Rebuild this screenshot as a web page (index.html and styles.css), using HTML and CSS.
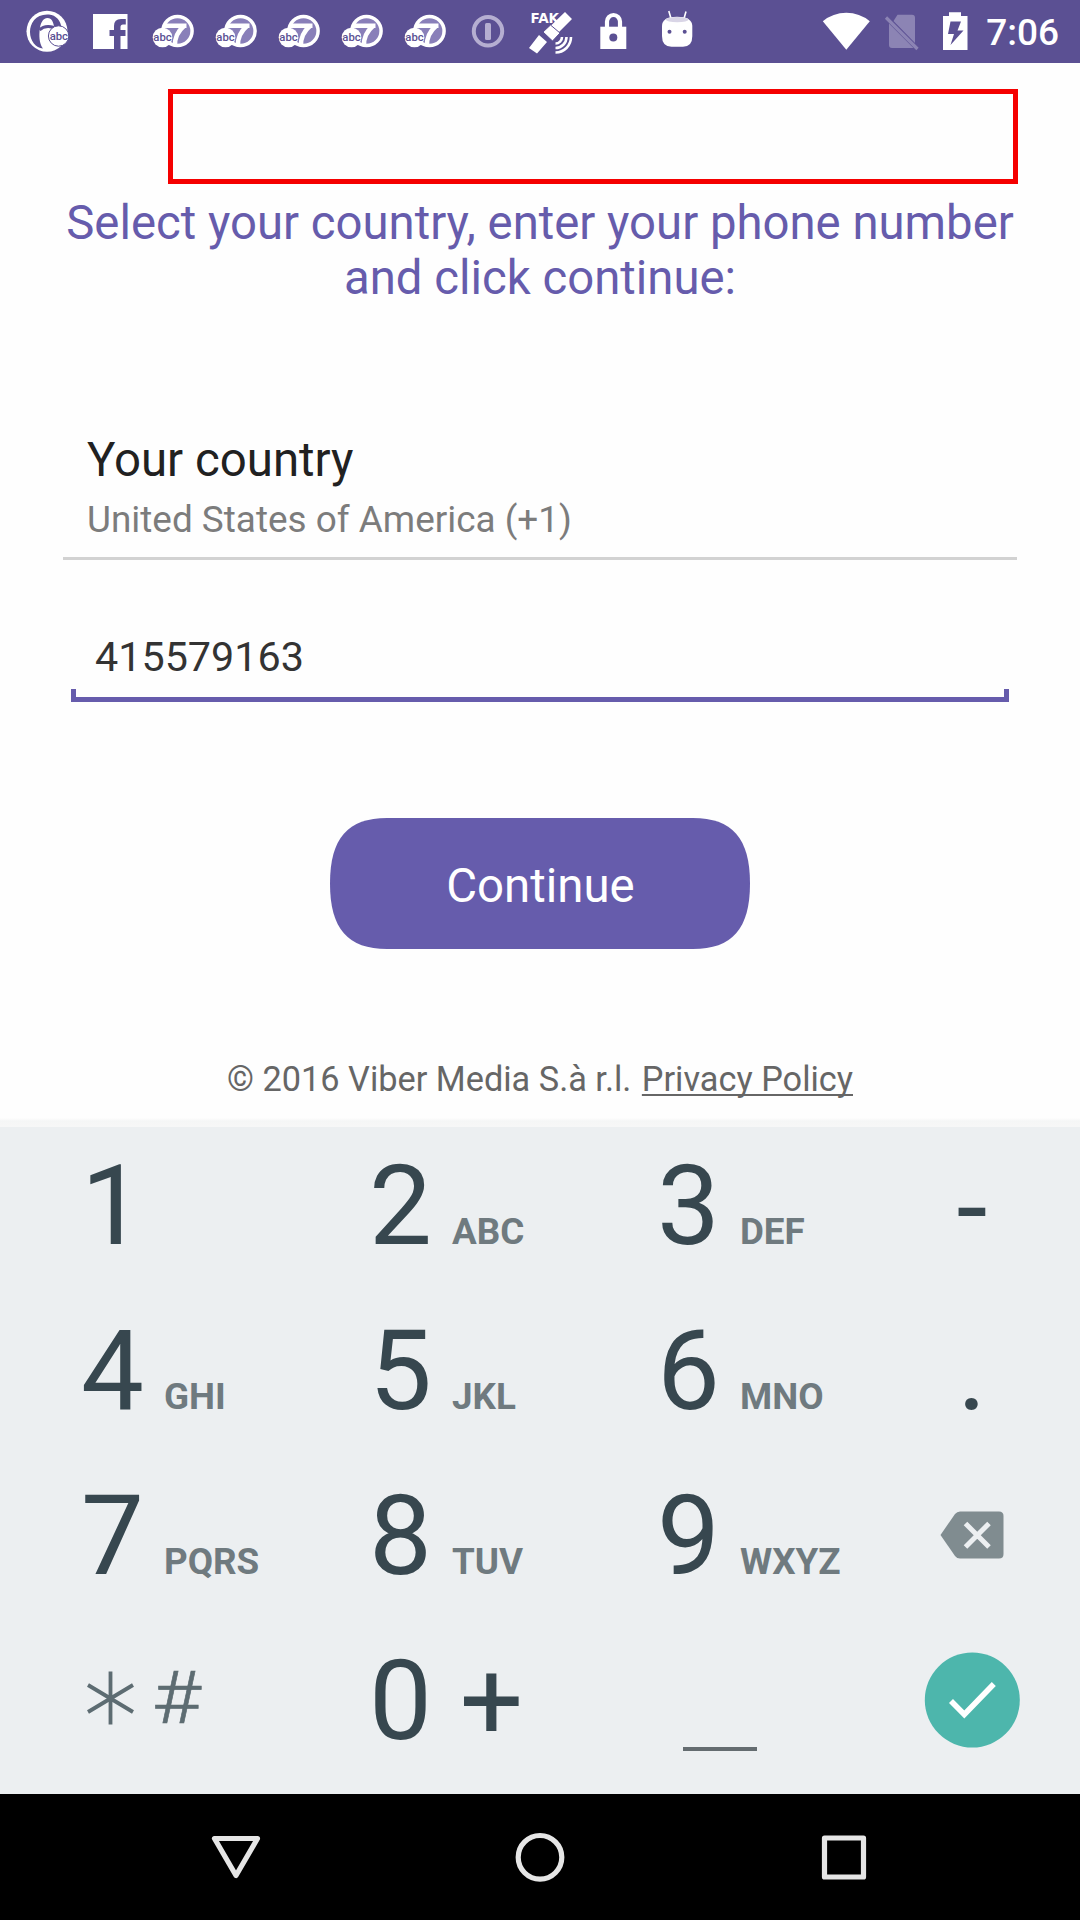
FILE: index.html
```html
<!DOCTYPE html>
<html lang="en">
<head>
<meta charset="utf-8">
<title>Phone registration</title>
<link rel="stylesheet" href="styles.css">
</head>
<body>
<header class="status">
  <div class="notifications">
    <svg class="note" viewBox="0 0 48 48">
      <circle cx="24" cy="23.3" r="20.5" fill="#fff"/>
      <path d="M26 6.500C13 5.500 7 15 7 24C7 33 13 40 20 40.500C17 37 16 30 16.500 24C17 15 20 10 24.500 10C29 10 30 14 31 18L38.500 20C38 13 33 7 26 6.500Z" fill="#5b5093"/>
      <path d="M16.500 22C21 17.500 29 17.500 34 21.500" fill="none" stroke="#5b5093" stroke-width="3"/>
      <circle cx="35.600" cy="28" r="10.200" fill="#fff" stroke="#5b5093" stroke-width="1"/>
      <text class="abc" x="35.800" y="31.500">abc</text>
    </svg>
    <svg class="note" viewBox="0 0 48 48">
      <path d="M7 6H41.500V41H34.500V28H39.500V22H34.500V19Q34.500 16.500 37 16.500H39.800V11H35Q28 11 28 18V22H23.500V28H28V41H7Z" fill="#fff"/>
    </svg>
    <svg class="note" viewBox="0 0 48 48">
      <circle cx="28.500" cy="23" r="14.600" fill="#897fb9" stroke="#fff" stroke-width="3.500"/>
      <path d="M16 17.800H37.500M35.500 17.500C29 23 25.500 30 26 38" fill="none" stroke="#fff" stroke-width="4.500"/>
      <circle cx="13.500" cy="29.500" r="9.800" fill="#fff"/>
      <text class="abc" x="13.500" y="32.800">abc</text>
    </svg>
    <svg class="note" viewBox="0 0 48 48">
      <circle cx="28.500" cy="23" r="14.600" fill="#897fb9" stroke="#fff" stroke-width="3.500"/>
      <path d="M16 17.800H37.500M35.500 17.500C29 23 25.500 30 26 38" fill="none" stroke="#fff" stroke-width="4.500"/>
      <circle cx="13.500" cy="29.500" r="9.800" fill="#fff"/>
      <text class="abc" x="13.500" y="32.800">abc</text>
    </svg>
    <svg class="note" viewBox="0 0 48 48">
      <circle cx="28.500" cy="23" r="14.600" fill="#897fb9" stroke="#fff" stroke-width="3.500"/>
      <path d="M16 17.800H37.500M35.500 17.500C29 23 25.500 30 26 38" fill="none" stroke="#fff" stroke-width="4.500"/>
      <circle cx="13.500" cy="29.500" r="9.800" fill="#fff"/>
      <text class="abc" x="13.500" y="32.800">abc</text>
    </svg>
    <svg class="note" viewBox="0 0 48 48">
      <circle cx="28.500" cy="23" r="14.600" fill="#897fb9" stroke="#fff" stroke-width="3.500"/>
      <path d="M16 17.800H37.500M35.500 17.500C29 23 25.500 30 26 38" fill="none" stroke="#fff" stroke-width="4.500"/>
      <circle cx="13.500" cy="29.500" r="9.800" fill="#fff"/>
      <text class="abc" x="13.500" y="32.800">abc</text>
    </svg>
    <svg class="note" viewBox="0 0 48 48">
      <circle cx="28.500" cy="23" r="14.600" fill="#897fb9" stroke="#fff" stroke-width="3.500"/>
      <path d="M16 17.800H37.500M35.500 17.500C29 23 25.500 30 26 38" fill="none" stroke="#fff" stroke-width="4.500"/>
      <circle cx="13.500" cy="29.500" r="9.800" fill="#fff"/>
      <text class="abc" x="13.500" y="32.800">abc</text>
    </svg>
    <svg class="note" viewBox="0 0 48 48">
      <circle cx="24" cy="23.300" r="14.200" fill="none" stroke="#b5aed1" stroke-width="4"/>
      <rect x="21" y="15" width="6" height="17" rx="1.500" fill="#b5aed1"/>
    </svg>
    <svg class="note" viewBox="0 0 48 48">
      <text class="fake" x="3.500" y="15">FAK</text>
      <path d="M38 4L45 11L31 25L23.500 18ZM12 27L20 34L10 45.500L2 40Z" fill="#fff"/>
      <path d="M23.500 17L33 25L25.500 33L16 24Z" fill="#fff" stroke="#5b5093" stroke-width="1"/>
      <path d="M35 29A6.500 6.500 0 0 1 28.500 35.500M39.500 29A11 11 0 0 1 28.500 40M44 29A15.500 15.500 0 0 1 28.500 44.500" fill="none" stroke="#fff" stroke-width="2.600"/>
    </svg>
    <svg class="note" viewBox="0 0 48 48">
      <path d="M17 20V13.500A6.500 6.500 0 0 1 30 13.500V20" fill="none" stroke="#fff" stroke-width="4.200"/>
      <path d="M10.300 18.700H36.300V41H10.300Z" fill="#fff"/>
      <circle cx="23.300" cy="29.500" r="4" fill="#5b5093"/>
    </svg>
    <svg class="note" viewBox="0 0 48 48">
      <path d="M15.800 3L18 10.500M33 3.500L31 10.500" stroke="#fff" stroke-width="1.600"/>
      <path d="M9 18Q9 8.700 24 8.700T39.300 18V28Q39.300 38.700 30 38.700H18.500Q9 38.700 9 28Z" fill="#fff"/>
      <ellipse cx="24.200" cy="11.600" rx="11.500" ry="2.700" fill="#d9d5e6"/>
      <circle cx="16.500" cy="23.700" r="2" fill="#5b5093"/><circle cx="31.700" cy="23.700" r="2" fill="#5b5093"/>
    </svg>
  </div>
  <div class="system">
    <svg width="48" height="48" viewBox="0 0 48 48"><path d="M.8 13.200Q11 4.700 24.300 4.700T47.800 13.200L24.300 41.700Z" fill="#fff"/></svg>
    <svg width="36" height="48" viewBox="0 0 36 48">
      <path d="M13.500 6.800H28Q31 6.800 31 9.800V35L9.500 13ZM5 15.500L29.500 40H8Q5 40 5 37Z" fill="#8c84b4"/>
      <path d="M2 9.500L33.500 41" stroke="#8c84b4" stroke-width="3.200"/>
    </svg>
    <svg width="26" height="48" viewBox="0 0 26 48">
      <path d="M1 8H7V4.300H19V8H25.500V42H1Z" fill="#fff"/>
      <path d="M8.500 13.500H19L15.500 22.500H21.500L8.500 37L12 26H6Z" fill="#5b5093"/>
    </svg>
    <span class="clock">7:06</span>
  </div>
</header>

<main class="form">
  <div class="redacted"></div>
  <h1 class="prompt">Select your country, enter your phone number<br>and click continue:</h1>
  <div class="country">
    <div class="country-label">Your country</div>
    <div class="country-value">United States of America (+1)</div>
  </div>
  <div class="phone">415579163</div>
  <button class="continue">
    <svg class="continue-shape" viewBox="0 0 420 131"><path d="M0 65.500C0 20 18 0 57 0H363C402 0 420 20 420 65.500S402 131 363 131H57C18 131 0 111 0 65.500Z" fill="#665cac"/></svg>
    <span class="continue-text">Continue</span>
  </button>
  <footer class="legal">© 2016 Viber Media S.à r.l. <a class="policy">Privacy Policy</a></footer>
</main>

<section class="keypad">
  <div class="key">1</div>
  <div class="key">2<span class="letters">ABC</span></div>
  <div class="key">3<span class="letters">DEF</span></div>
  <div class="key side hyphen">-</div>
  <div class="key">4<span class="letters">GHI</span></div>
  <div class="key">5<span class="letters">JKL</span></div>
  <div class="key">6<span class="letters">MNO</span></div>
  <div class="key side">.</div>
  <div class="key">7<span class="letters">PQRS</span></div>
  <div class="key">8<span class="letters">TUV</span></div>
  <div class="key">9<span class="letters">WXYZ</span></div>
  <div class="key icon side">
    <svg width="64" height="48" viewBox="0 0 64 48">
      <path d="M.5 24L15 3Q17 .5 20 .5H59Q63.500 .5 63.500 5V43Q63.500 47.500 59 47.500H20Q17 47.500 15 45Z" fill="#808c90"/>
      <path d="M25.500 12.500L49 36M49 12.500L25.500 36" stroke="#eceff1" stroke-width="5"/>
    </svg>
  </div>
  <div class="key icon symbols">
    <svg width="48" height="54" viewBox="0 0 48 54"><path d="M24.500 .5V53.500M2 14L47 41M47 14L2 41" stroke="#5d6c72" stroke-width="3.800"/></svg>
    <span class="hash">#</span>
  </div>
  <div class="key">0 +</div>
  <div class="key icon space"><span class="space-bar"></span></div>
  <div class="key icon side">
    <svg width="96" height="96" viewBox="0 0 96 96"><circle cx="48.300" cy="48" r="47.500" fill="#4db6ac"/><path d="M27 49L40.300 62.500L69.800 32" fill="none" stroke="#fff" stroke-width="5.600"/></svg>
  </div>
</section>

<nav class="navbar">
  <svg width="50" height="50" viewBox="0 0 50 50"><path d="M3.500 6.500H46.500L25 43.500Z"/></svg>
  <svg width="50" height="50" viewBox="0 0 50 50"><circle cx="25" cy="25.300" r="21.800"/></svg>
  <svg width="50" height="50" viewBox="0 0 50 50"><rect x="5.500" y="6" width="39" height="39"/></svg>
</nav>
</body>
</html>
```
FILE: styles.css
```css
* { box-sizing: border-box; }
body {
  margin: 0;
  width: 1080px;
  height: 1920px;
  display: flex;
  flex-direction: column;
  background: #fefefe;
  font-family: Roboto, "Liberation Sans", sans-serif;
  overflow: hidden;
}
svg { display: block; flex: none; }

.status {
  height: 63px;
  flex: none;
  display: flex;
  justify-content: space-between;
  padding: 8px 21px 0 23px;
  background: #5b5093;
  color: #fff;
}
.notifications { display: flex; gap: 15px; }
.note { width: 48px; height: 48px; }
.abc {
  font: 500 11.3px Roboto, sans-serif;
  text-anchor: middle;
  fill: #5b5093;
}
.fake { font: 700 13.5px "DejaVu Sans", sans-serif; fill: #fff; }
.system { display: flex; }
.system svg + svg { margin-left: 14px; }
.system svg:nth-child(3) { margin-left: 22px; }
.clock {
  margin-left: 18px;
  font-size: 37px;
  font-weight: 500;
  line-height: 49px;
}

.form {
  height: 1064px;
  flex: none;
  display: flex;
  flex-direction: column;
  padding: 26px 63px 0;
  background: linear-gradient(#fefefe 1055px, #f5f6f6 1058px, #f7f7f7 1064px);
}
.redacted {
  height: 95px;
  width: 850px;
  margin-left: 105px;
  border: 5px solid #f50000;
}
.prompt {
  margin: 12px -20px 0;
  text-align: center;
  font-size: 47.3px;
  line-height: 55px;
  font-weight: 400;
  color: #665cac;
  white-space: nowrap;
}
.country {
  margin-top: 126px;
  height: 128px;
  padding-left: 24px;
  border-bottom: 3px solid #d2d2d2;
}
.country-label { font-size: 47.4px; line-height: 56px; color: #212121; }
.country-value { margin-top: 10px; font-size: 36.9px; line-height: 44px; color: #7c7c7c; }
.phone {
  margin: 72px 8px 0;
  height: 70px;
  padding-left: 24px;
  font-size: 41.3px;
  line-height: 50px;
  color: #333;
  background:
    linear-gradient(#665cac, #665cac) 0 100% / 100% 5px no-repeat,
    linear-gradient(#665cac, #665cac) 0 100% / 5px 13px no-repeat,
    linear-gradient(#665cac, #665cac) 100% 100% / 5px 13px no-repeat;
}
.continue {
  position: relative;
  align-self: center;
  width: 420px;
  height: 131px;
  margin-top: 116px;
  padding: 5px 0 0 1px;
  border: 0;
  background: none;
  font: 400 47.4px Roboto, sans-serif;
  color: #fff;
}
.continue-shape { position: absolute; inset: 0; width: 420px; height: 131px; }
.continue-text { position: relative; }
.legal {
  margin-top: 108px;
  text-align: center;
  font-size: 34.3px;
  line-height: 44px;
  color: #666;
  white-space: nowrap;
}
.policy {
  margin-left: 2px;
  text-decoration: underline;
  text-decoration-thickness: 2px;
  text-underline-offset: 3px;
  text-decoration-skip-ink: none;
}

.keypad {
  height: 667px;
  flex: none;
  display: grid;
  grid-template-columns: 288px 288px 288px 216px;
  grid-template-rows: repeat(4, 165px);
  background: #eceff1;
}
.key {
  padding-left: 81px;
  font-size: 112px;
  line-height: 157px;
  color: #37474f;
  white-space: pre;
}
.letters { margin-left: 20px; font-size: 36.8px; font-weight: 700; color: #6f7a7f; }
.side { padding-left: 0; text-align: center; }
.hyphen { padding-top: 2px; }
.icon { display: flex; align-items: center; }
.icon.side { justify-content: center; padding-bottom: 10px; }
.icon.side:last-child { padding-bottom: 9px; }
.symbols { padding-left: 86px; padding-bottom: 13px; gap: 18px; }
.hash {
  font-size: 73px;
  font-weight: 300;
  line-height: 80px;
  color: #5d6c72;
  -webkit-text-stroke: 0.6px #5d6c72;
  transform: scaleX(1.15);
  transform-origin: left;
}
.space { align-items: flex-end; padding: 0 0 36px 107px; }
.space-bar { width: 74px; height: 4px; background: #646c70; }

.navbar {
  height: 126px;
  flex: none;
  display: flex;
  justify-content: center;
  gap: 254px;
  padding: 38px 0 0;
  background: #000;
}
.navbar svg { fill: none; stroke: #e6e6e6; stroke-width: 5.2; stroke-linejoin: round; }
```
